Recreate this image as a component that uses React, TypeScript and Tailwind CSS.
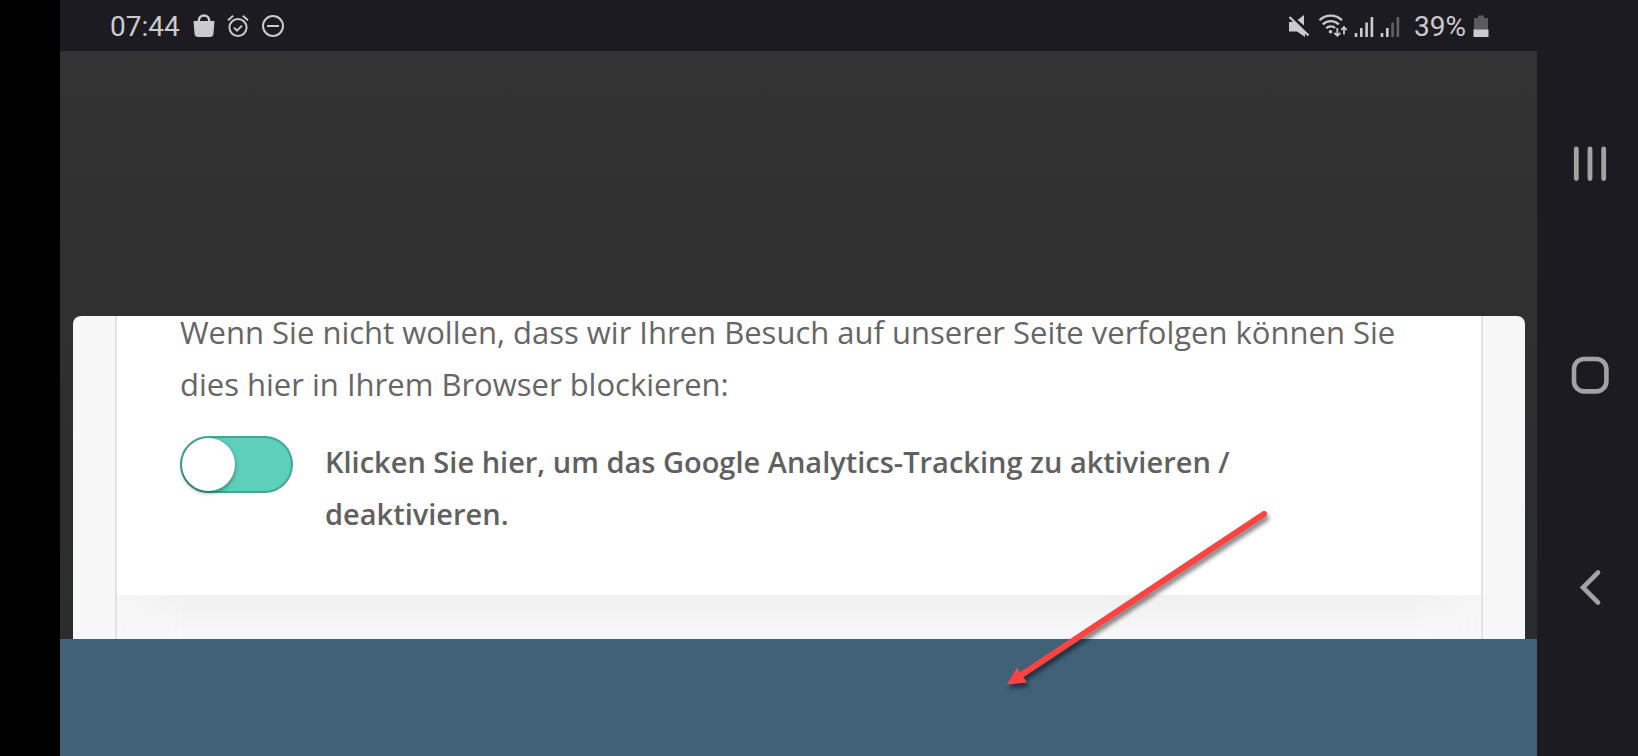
import { useState } from "react";

function StatusBar() {
  return (
    <header className="flex h-[51px] shrink-0 items-center justify-between bg-[#1c1b21] pl-[50px] pr-12 text-[#cbcbcd]">
      <div className="flex items-center">
        <span className="pt-0.5 font-[Roboto,sans-serif] text-[28px] leading-8">07:44</span>

        {/* shop bag */}
        <svg className="ml-[13px] h-6 w-[22px]" viewBox="0 0 22 24" fill="none">
          <path d="M0.5 7h21l-1 12.500q-.3 3.500-3.800 3.500H5.300q-3.500 0-3.800-3.500z" fill="currentColor" />
          <path d="M5.800 9V6.500a5.200 5 0 0 1 10.400 0V9" stroke="currentColor" strokeWidth="2.400" />
        </svg>

        {/* alarm */}
        <svg className="ml-3 h-6 w-[22px]" viewBox="0 0 22 24" fill="none" stroke="currentColor" strokeWidth="2">
          <circle cx="11" cy="13.500" r="8.600" />
          <path d="M1 6.200l5.200-4.400M21 6.200l-5.200-4.400" />
          <path d="M7 13.600l3 3 5-5" />
        </svg>

        {/* do not disturb */}
        <svg className="ml-3 h-6 w-6" viewBox="0 0 24 24" fill="none" stroke="currentColor" strokeWidth="2">
          <circle cx="12" cy="12" r="10" />
          <path d="M6 12h12" />
        </svg>
      </div>

      <div className="flex items-center">
        {/* muted */}
        <svg className="h-6 w-[22px]" viewBox="0 0 22 24" fill="currentColor">
          <path d="M1 8h6l10 10v5L9 17.500H1z" />
          <path d="M9.500 6L16 1v10.500z" />
          <path d="M1.500 3L20.500 21.500" stroke="currentColor" strokeWidth="2.400" />
          <path d="M4 2.500L17 15.200" stroke="#1c1b21" strokeWidth="1.200" />
        </svg>

        {/* wifi */}
        <svg className="ml-2 h-6 w-[30px]" viewBox="0 0 30 24" fill="none" stroke="currentColor" strokeWidth="2.300">
          <path d="M1.500 6.200a16 16 0 0 1 22.500 0" />
          <path d="M4.800 10.400a11.500 11.500 0 0 1 16 0" />
          <path d="M8.200 14.200a6.600 6.600 0 0 1 9-.2" />
          <circle cx="12.500" cy="17.800" r="1.800" fill="currentColor" stroke="none" />
          <path d="M19.300 14v7.500M16.300 18.800l3 3 3-3M26 20.500v-7.500M23.200 16l2.800-3 2.800 3" strokeWidth="1.800" />
        </svg>

        {/* both sim cards */}
        <svg className="ml-1.5 h-6 w-5" viewBox="0 0 20 24" stroke="currentColor" strokeWidth="2.600">
          <path d="M2 23v-4M7.300 23v-9M12.600 23V8.500M17.900 23V3" />
        </svg>
        <svg className="ml-1.5 h-6 w-5" viewBox="0 0 20 24" stroke="currentColor" strokeWidth="2.600">
          <path d="M2 23v-4M7.300 23v-9" />
          <path d="M12.600 23V8.500M17.900 23V3" opacity=".4" />
        </svg>

        <span className="ml-3.5 pt-0.5 font-[Roboto,sans-serif] text-[28px] leading-8">39%</span>

        {/* battery */}
        <svg className="ml-[7px] h-6 w-4" viewBox="0 0 16 24">
          <path d="M5 1.500h6v2.500h4V16H1V4h4z" fill="#5b5a5e" />
          <path d="M.5 15.500h15v7.500H.5z" fill="currentColor" />
        </svg>
      </div>
    </header>
  );
}

function NavBar() {
  return (
    <nav className="flex w-[101px] shrink-0 flex-col justify-center bg-[#1c1b21] pb-1 pl-1 text-[#a3a3a6]">
      <button type="button" aria-label="Letzte Apps" className="flex h-[212px] items-center justify-center">
        <svg className="h-10 w-10" viewBox="0 0 40 40" stroke="currentColor" strokeWidth="4.800" strokeLinecap="round">
          <path d="M6.300 5v29.500M20 5v29.500M33.700 5v29.500" />
        </svg>
      </button>
      <button type="button" aria-label="Startbildschirm" className="flex h-[212px] items-center justify-center">
        <svg className="h-10 w-10" viewBox="0 0 40 40" fill="none" stroke="currentColor" strokeWidth="4.600">
          <rect x="4" y="3" width="32.400" height="32.400" rx="10" />
        </svg>
      </button>
      <button type="button" aria-label="Zurück" className="flex h-[212px] items-center justify-center">
        <svg className="h-10 w-10" viewBox="0 0 40 40" fill="none" stroke="currentColor" strokeWidth="4.600" strokeLinecap="round">
          <path d="M28 4.500L13 19.500 28 34.500" />
        </svg>
      </button>
    </nav>
  );
}

export default function App() {
  const [blocked, setBlocked] = useState(false);

  return (
    <div className="flex min-h-screen bg-black pl-[60px]">
      <div className="relative flex min-w-0 flex-1 flex-col">
        <StatusBar />

        <main className="flex flex-1 flex-col justify-end bg-linear-to-b from-[#333333] to-[#2b2c2e] pl-[13px] pr-3">
          {/* consent sheet, scrolled so the first line touches its top edge */}
          <section className="rounded-t-lg bg-[#f7f7f7] px-[42px] font-['Open_Sans',sans-serif] text-[#606060]">
            <div className="border-x-2 border-[#e2e2e2]">
              <div className="flow-root bg-white px-[63px] pb-[55px]">
                <p className="-mt-2.5 text-[31px] leading-[52px] text-[#666666]">
                  Wenn Sie nicht wollen, dass wir Ihren Besuch auf unserer Seite verfolgen können Sie dies hier in Ihrem
                  Browser blockieren:
                </p>
                <label className="mt-[26px] flex cursor-pointer items-start gap-8 pr-10">
                  <input
                    type="checkbox"
                    className="peer sr-only"
                    checked={blocked}
                    onChange={(e) => setBlocked(e.target.checked)}
                  />
                  <span
                    className={`flex h-[57px] w-[113px] shrink-0 rounded-full border-2 transition-colors peer-focus-visible:ring-2 ${
                      blocked ? "justify-end border-[#b5b5b5] bg-[#dddddd]" : "justify-start border-[#43a893] bg-[#5dcfba]"
                    }`}
                  >
                    <span className="h-[53px] w-[53px] rounded-full bg-white shadow-[0_2px_4px_rgba(0,0,0,0.4)]" />
                  </span>
                  <span className="text-[29px] font-semibold leading-[52px]">
                    Klicken Sie hier, um das Google Analytics-Tracking zu aktivieren / deaktivieren.
                  </span>
                </label>
              </div>
              {/* soft shadow under the white panel */}
              <div className="h-11 bg-linear-to-b from-[#f0f0f0] to-[#f7f7f7] to-80% mask-x-from-95% mask-x-to-100%" />
            </div>
          </section>
        </main>

        <footer className="h-[117px] shrink-0 bg-[#406178]" />

        {/* pointer arrow */}
        <svg
          className="pointer-events-none absolute bottom-[55px] left-[940px] h-[200px] w-[280px] drop-shadow-[2px_4px_2px_rgba(0,0,0,0.5)]"
          viewBox="0 0 280 200"
        >
          <path d="M264 13L22 173.500" stroke="#ff4242" strokeWidth="6" strokeLinecap="round" />
          <path d="M7 183.500L17 166.500l10 15z" fill="#ff4242" />
        </svg>
      </div>

      <NavBar />
    </div>
  );
}
